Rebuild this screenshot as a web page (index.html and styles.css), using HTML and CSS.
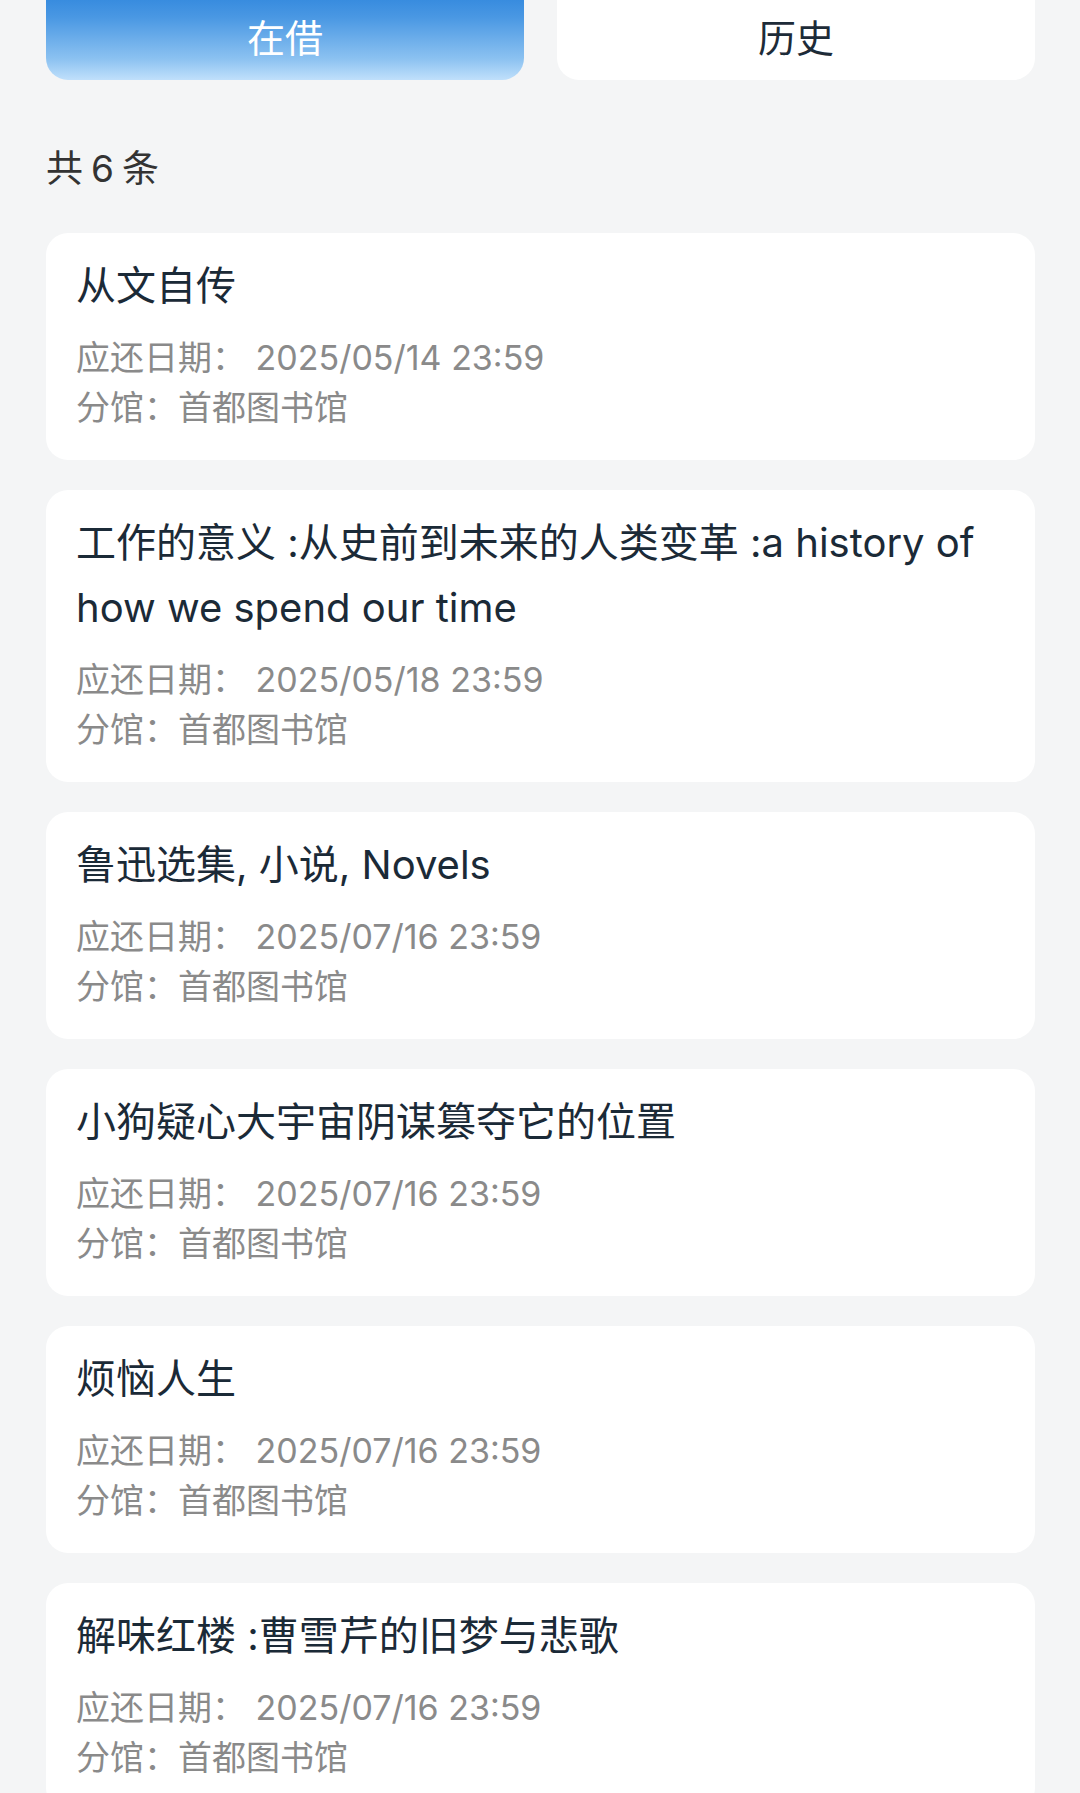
FILE: index.html
```html
<!DOCTYPE html>
<html lang="zh-CN">
<head>
  <meta charset="UTF-8">
  <meta name="viewport" content="width=device-width, initial-scale=1.0">
  <title>我的借阅</title>
  <link rel="stylesheet" href="styles.css">
</head>
<body>

  <!-- 切换标签 -->
  <div class="tabs">
    <div class="tab ativo">在借</div>
    <div class="tab">历史</div>
  </div>

  <p class="total">共6条</p>

  <!-- 借阅列表 -->
  <ul class="lista">
    <li class="cartao">
      <h3 class="titulo">从文自传</h3>
      <p class="info">应还日期<span class="dp">：</span> 2025/05/14 23:59</p>
      <p class="info">分馆<span class="dp">：</span>首都图书馆</p>
    </li>
    <li class="cartao">
      <h3 class="titulo">工作的意义 :从史前到未来的人类变革 :a history of how we spend our time</h3>
      <p class="info">应还日期<span class="dp">：</span> 2025/05/18 23:59</p>
      <p class="info">分馆<span class="dp">：</span>首都图书馆</p>
    </li>
    <li class="cartao">
      <h3 class="titulo">鲁迅选集, 小说, Novels</h3>
      <p class="info">应还日期<span class="dp">：</span> 2025/07/16 23:59</p>
      <p class="info">分馆<span class="dp">：</span>首都图书馆</p>
    </li>
    <li class="cartao">
      <h3 class="titulo">小狗疑心大宇宙阴谋篡夺它的位置</h3>
      <p class="info">应还日期<span class="dp">：</span> 2025/07/16 23:59</p>
      <p class="info">分馆<span class="dp">：</span>首都图书馆</p>
    </li>
    <li class="cartao">
      <h3 class="titulo">烦恼人生</h3>
      <p class="info">应还日期<span class="dp">：</span> 2025/07/16 23:59</p>
      <p class="info">分馆<span class="dp">：</span>首都图书馆</p>
    </li>
    <li class="cartao">
      <h3 class="titulo">解味红楼 :曹雪芹的旧梦与悲歌</h3>
      <p class="info">应还日期<span class="dp">：</span> 2025/07/16 23:59</p>
      <p class="info">分馆<span class="dp">：</span>首都图书馆</p>
    </li>
  </ul>

</body>
</html>
```

FILE: styles.css
```css
/* Estilos gerais */
body {
  margin: 0;
  padding: 0 45px 0 46px;
  font-family: Inter, "Noto Sans CJK SC", sans-serif;
  background: #f4f5f6;
  overflow: hidden;
}

/* Abas no topo (rolado um pouco para cima) */
.tabs {
  display: flex;
  gap: 33px;
  margin-top: -24px;
}

.tab {
  flex: 1;
  height: 104px;
  padding-top: 14px;
  box-sizing: border-box;
  display: flex;
  align-items: center;
  justify-content: center;
  background: #fff;
  border-radius: 22px;
  font-size: 38px;
  color: #1d2b38;
}

.tab.ativo {
  background: linear-gradient(to bottom, #1f7bd9 0%, #4a98e3 40%, #8cc2f1 80%, #c0e0fb 100%);
  color: #fff;
}

.total {
  margin: 64px 0 39px;
  font-size: 37px;
  line-height: 50px;
  letter-spacing: 8px;
  color: #333;
}

/* Lista de livros */
.lista {
  list-style: none;
  margin: 0;
  padding: 0;
  display: flex;
  flex-direction: column;
  gap: 30px;
}

.cartao {
  background: #fff;
  border-radius: 22px;
  padding: 20px 30px 28px;
}

.titulo {
  margin: 0 0 14px;
  font-size: 40px;
  font-weight: normal;
  line-height: 65px;
  color: #1b2a37;
}

.info {
  margin: 0;
  font-size: 34px;
  line-height: 48px;
  color: #8a8a8a;
}

/* dois-pontos centralizado, como no app */
.dp {
  font-family: "Noto Sans CJK TC", sans-serif;
}
```
